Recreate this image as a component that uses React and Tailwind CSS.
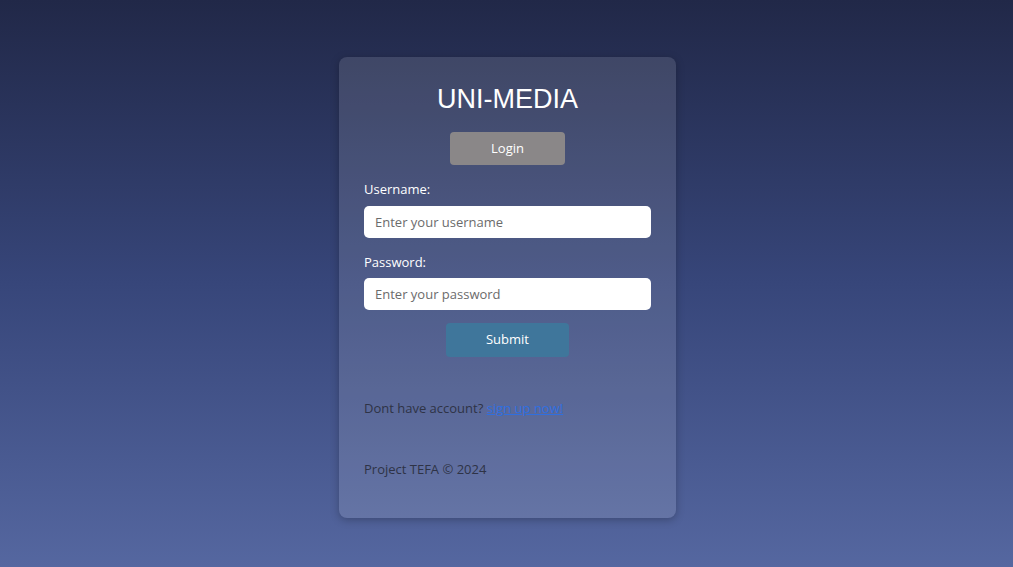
import React, { useState } from 'react';

const App = () => {
  const [username, setUsername] = useState('');
  const [password, setPassword] = useState('');

  return (
    <div
      className="h-[567px] w-full flex justify-center bg-gradient-to-b from-[#212848] via-[#37467a] to-[#5567a0] pt-[57px] pl-[2px]"
      style={{ fontFamily: '"Open Sans", "Noto Sans", sans-serif' }}
    >
      <div className="w-[337px] h-[461px] bg-white/[0.12] rounded-lg shadow-[0_2px_8px_rgba(0,0,0,0.25)] px-[25px] pt-[26px] flex flex-col">
        <h1
          className="text-center text-white text-[27px] leading-[32px]"
          style={{ fontFamily: '"Liberation Sans", Arial, sans-serif' }}
        >
          UNI-MEDIA
        </h1>

        <div className="flex justify-center mt-[17px]">
          <button className="w-[115px] h-[33px] bg-[#8a8788] rounded-[4px] text-white text-[13px]">
            Login
          </button>
        </div>

        <form className="mt-[15px] flex flex-col" onSubmit={(e) => e.preventDefault()}>
          <label className="text-white text-[13px] leading-[18px]">Username:</label>
          <input
            type="text"
            value={username}
            onChange={(e) => setUsername(e.target.value)}
            placeholder="Enter your username"
            className="mt-[8px] h-[32px] w-full bg-white rounded-[5px] px-[11px] text-[13px] text-gray-800 placeholder:text-[#6b6b6b] outline-none"
          />

          <label className="mt-[15px] text-white text-[13px] leading-[18px]">Password:</label>
          <input
            type="password"
            value={password}
            onChange={(e) => setPassword(e.target.value)}
            placeholder="Enter your password"
            className="mt-[7px] h-[32px] w-full bg-white rounded-[5px] px-[11px] text-[13px] text-gray-800 placeholder:text-[#6b6b6b] outline-none"
          />

          <div className="flex justify-center mt-[13px]">
            <button
              type="submit"
              className="w-[123px] h-[34px] bg-[#3f769b] rounded-[4px] text-white text-[13px]"
            >
              Submit
            </button>
          </div>
        </form>

        <p className="mt-[42px] text-[13px] leading-[18px] text-[#2e3346]">
          Dont have account?{' '}
          <a href="#" className="text-[#2f6fe0] underline">sign up now!</a>
        </p>

        <p className="mt-[43px] text-[13px] leading-[18px] text-[#2e3346]">Project TEFA © 2024</p>
      </div>
    </div>
  );
};

export default App;
